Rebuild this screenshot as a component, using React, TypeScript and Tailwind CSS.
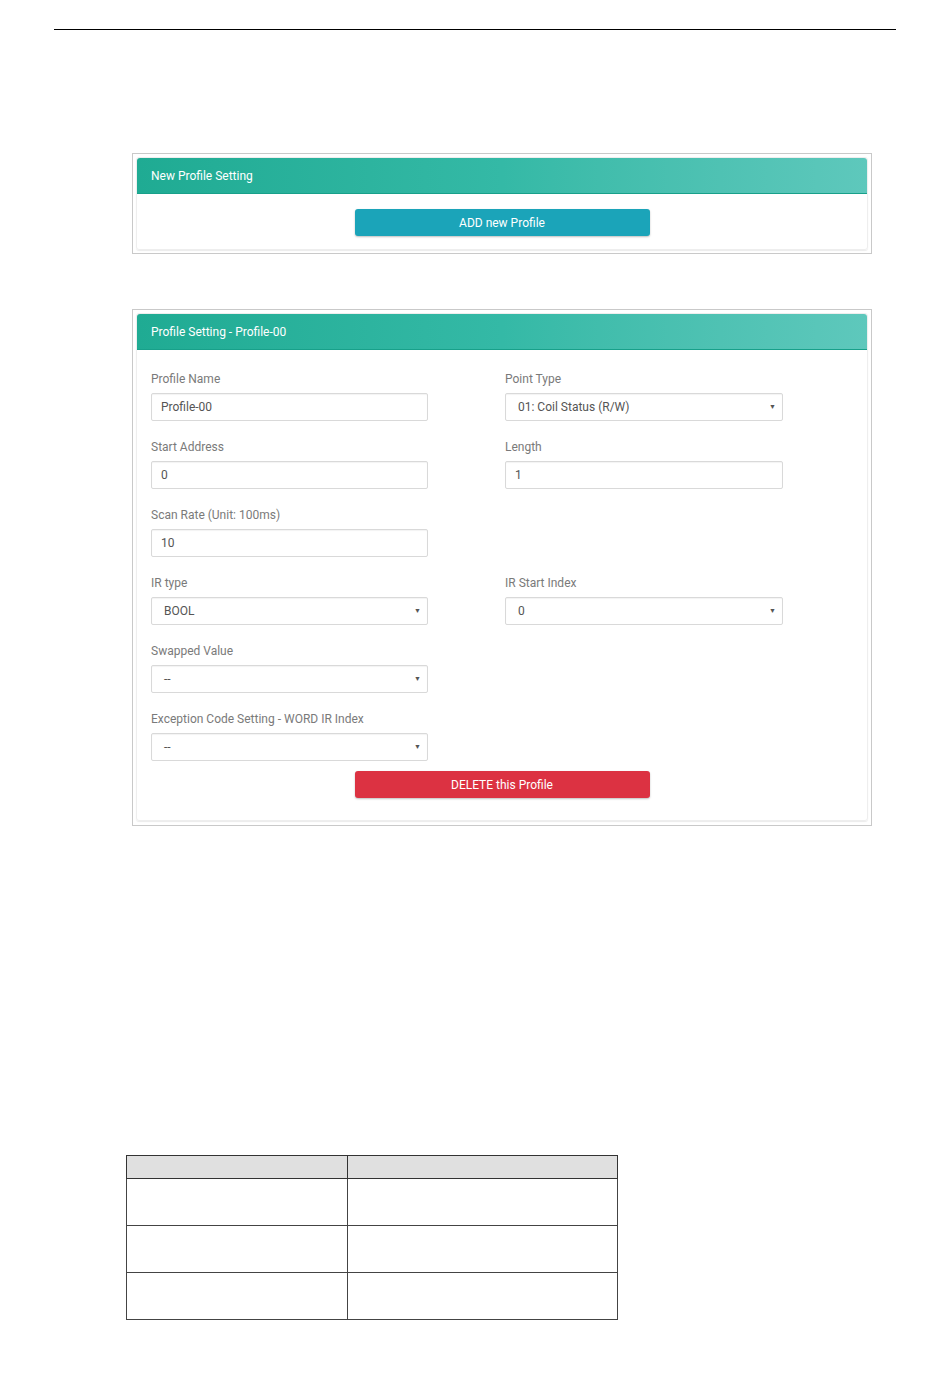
import React from 'react'

const font = { fontFamily: 'Roboto, "Liberation Sans", sans-serif' }

function Header({ title }: { title: string }) {
  return (
    <div className="h-[36px] flex items-center px-[14px] rounded-t-[3px] bg-gradient-to-r from-[#1fab93] via-[#34b9a6] to-[#5ec8bc] text-white text-[12px] border-b border-[#18a08a]">
      {title}
    </div>
  )
}

function Field({ label, value, select }: { label: string; value: string; select?: boolean }) {
  return (
    <div className="flex flex-col">
      <label className="h-[16px] leading-[16px] text-[12px] text-[#7a7a7a]">{label}</label>
      <div className="mt-[6px] h-[28px] border border-[#d9d9d9] rounded-[2px] shadow-[inset_0_1px_1px_rgba(0,0,0,0.05)] flex items-center justify-between pl-[9px] pr-[6px] text-[12px] text-[#555]">
        <span className={select ? 'pl-[3px]' : ''}>{value}</span>
        {select && <span className="text-[7px] text-[#555]">▼</span>}
      </div>
    </div>
  )
}

function Empty() {
  return <div />
}

export default function App() {
  return (
    <div className="bg-white min-h-[1378px] pt-[29px] pb-[60px]" style={font}>
      <div className="mx-[54px] border-t border-black" />

      {/* new profile */}
      <div className="ml-[132px] w-[740px] mt-[123px] border border-[#c9c9c9] pt-[3px] px-[3px] pb-[3px]">
        <div className="border border-[#eeeeee] rounded-[3px] shadow-[0_1px_1px_rgba(0,0,0,0.08)]">
          <Header title="New Profile Setting" />
          <div className="flex justify-center pt-[15px] pb-[13px]">
            <button className="w-[295px] h-[27px] rounded-[3px] bg-[#1ba4b9] text-white text-[12px] shadow-[0_1px_2px_rgba(0,0,0,0.25)]">
              ADD new Profile
            </button>
          </div>
        </div>
      </div>

      {/* profile 00 */}
      <div className="ml-[132px] w-[740px] mt-[55px] border border-[#c9c9c9] pt-[3px] px-[3px] pb-[4px]">
        <div className="border border-[#eeeeee] rounded-[3px] shadow-[0_1px_1px_rgba(0,0,0,0.08)]">
          <Header title="Profile Setting - Profile-00" />
          <div className="pt-[21px] px-[14px] pb-[22px]">
            <div className="grid grid-cols-[277px_278px] gap-x-[77px] gap-y-[18px]">
              <Field label="Profile Name" value="Profile-00" />
              <Field label="Point Type" value="01: Coil Status (R/W)" select />
              <Field label="Start Address" value="0" />
              <Field label="Length" value="1" />
              <Field label="Scan Rate (Unit: 100ms)" value="10" />
              <Empty />
              <Field label="IR type" value="BOOL" select />
              <Field label="IR Start Index" value="0" select />
              <Field label="Swapped Value" value="--" select />
              <Empty />
              <Field label="Exception Code Setting - WORD IR Index" value="--" select />
              <Empty />
            </div>
            <div className="flex justify-center mt-[10px]">
              <button className="w-[295px] h-[27px] rounded-[3px] bg-[#dc3242] text-white text-[12px] shadow-[0_1px_2px_rgba(0,0,0,0.25)]">
                DELETE this Profile
              </button>
            </div>
          </div>
        </div>
      </div>

      {/* table */}
      <table className="ml-[126px] mt-[329px] w-[492px] border-collapse">
        <thead>
          <tr className="h-[23px] bg-[#e0e0e0]">
            <th className="w-[221px] border-[1.5px] border-[#333]"></th>
            <th className="border-[1.5px] border-[#333]"></th>
          </tr>
        </thead>
        <tbody>
          {[0, 1, 2].map((i) => (
            <tr key={i} className="h-[47px]">
              <td className="border-[1.5px] border-[#444]"></td>
              <td className="border-[1.5px] border-[#444]"></td>
            </tr>
          ))}
        </tbody>
      </table>
    </div>
  )
}
